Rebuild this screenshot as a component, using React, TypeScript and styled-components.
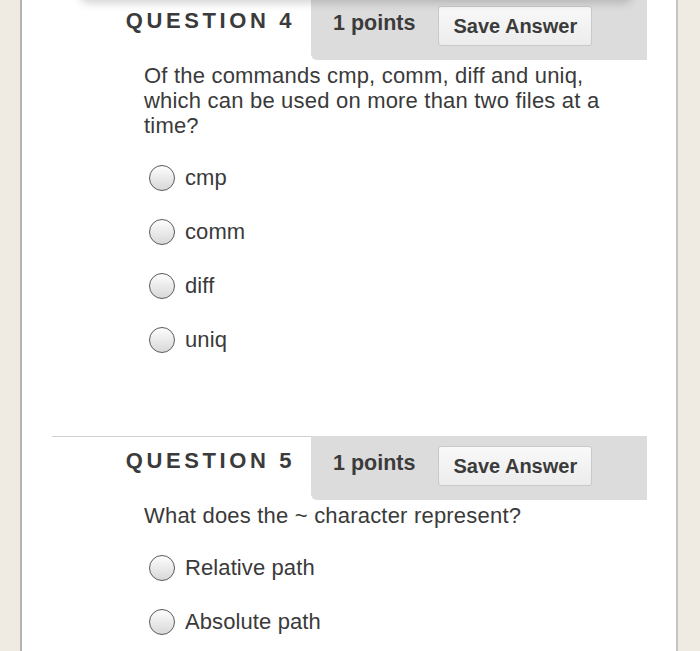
import React from 'react';
import styled, { createGlobalStyle } from 'styled-components';

const GlobalStyle = createGlobalStyle`
  html, body {
    margin: 0;
    padding: 0;
    background: #efebe2;
    overflow: hidden;
  }
  body {
    font-family: "Liberation Sans", Arial, Helvetica, sans-serif;
    color: #3a3a3a;
  }
`;

const Page = styled.div`
  position: relative;
  width: 700px;
  height: 651px;
  overflow: hidden;
`;

// floating toolbar that sits above the visible area, only its shadow shows
const FloatingBar = styled.div`
  position: absolute;
  top: -40px;
  left: 80px;
  width: 552px;
  height: 40px;
  background: #fff;
  border-radius: 8px;
  box-shadow: 0 3px 10px rgba(0, 0, 0, 0.18);
  z-index: 2;
`;

const Card = styled.div`
  box-sizing: border-box;
  margin: -4px 0 0 20px;
  width: 658px;
  min-height: 700px;
  background: #fff;
  border-left: 2px solid #b4b4b4;
  border-right: 2px solid #c4c4c4;
  padding: 0 29px 0 30px;
`;

const Question = styled.section<{ first?: boolean }>`
  border-top: 1px solid ${({ first }) => (first ? 'transparent' : '#cfcfcf')};
  margin-bottom: ${({ first }) => (first ? '69px' : '0')};
`;

const Header = styled.div`
  display: flex;
  margin-top: -1px;
`;

const Title = styled.h2`
  margin: 0;
  width: 259px;
  box-sizing: border-box;
  padding: 12px 16px 0 0;
  text-align: right;
  font-size: 22px;
  line-height: 26px;
  font-weight: bold;
  letter-spacing: 3.6px;
  color: #3b3b3b;
`;

const Meta = styled.div`
  flex: 1;
  display: flex;
  align-items: center;
  gap: 23px;
  padding: 10px 0 14px 22px;
  background: #dcdcdc;
  border-bottom-left-radius: 6px;
`;

const Points = styled.span`
  font-size: 21.5px;
  font-weight: bold;
  color: #3b3b3b;
  margin-top: -5px;
`;

const SaveButton = styled.button`
  height: 40px;
  padding: 0 14px;
  font-family: inherit;
  font-size: 20px;
  font-weight: bold;
  color: #3b3b3b;
  background: linear-gradient(#f9f9f9, #ececec);
  border: 1px solid #c9c9c9;
  border-radius: 3px;
`;

const Body = styled.div`
  padding: 3px 0 0 92px;
`;

const Prompt = styled.p`
  margin: 0;
  font-size: 22px;
  letter-spacing: 0.2px;
  line-height: 25px;
  color: #3a3a3a;
  max-width: 470px;
`;

const Options = styled.div`
  display: flex;
  flex-direction: column;
  margin-top: 13px;
`;

const Option = styled.label`
  display: flex;
  align-items: center;
  gap: 10px;
  height: 54px;
  padding-left: 5px;
  font-size: 22px;
  letter-spacing: 0.1px;
  color: #3a3a3a;
`;

const Radio = styled.span`
  width: 24px;
  height: 24px;
  border-radius: 50%;
  border: 1.6px solid #5a5a5a;
  background: linear-gradient(#fdfdfd, #d8d8d8);
  flex-shrink: 0;
`;

interface IQuestion {
  number: number
  points: number
  prompt: string
  options: string[]
}

const questions: IQuestion[] = [
  {
    number: 4,
    points: 1,
    prompt: 'Of the commands cmp, comm, diff and uniq, which can be used on more than two files at a time?',
    options: ['cmp', 'comm', 'diff', 'uniq'],
  },
  {
    number: 5,
    points: 1,
    prompt: 'What does the ~ character represent?',
    options: ['Relative path', 'Absolute path'],
  },
];

const App: React.FC = () => {
  return (
    <Page>
      <GlobalStyle />
      <FloatingBar />
      <Card>
        {questions.map((q, i) => (
          <Question key={q.number} first={i === 0}>
            <Header>
              <Title>QUESTION {q.number}</Title>
              <Meta>
                <Points>{q.points} points</Points>
                <SaveButton type='button'>Save Answer</SaveButton>
              </Meta>
            </Header>
            <Body>
              <Prompt>{q.prompt}</Prompt>
              <Options>
                {q.options.map(opt => (
                  <Option key={opt}>
                    <Radio />
                    {opt}
                  </Option>
                ))}
              </Options>
            </Body>
          </Question>
        ))}
      </Card>
    </Page>
  );
};

export default App;
